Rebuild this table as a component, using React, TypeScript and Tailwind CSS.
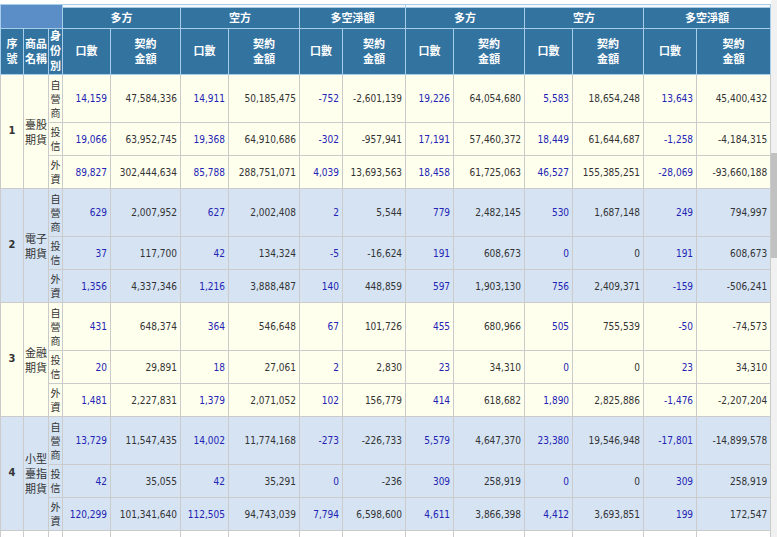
import React from 'react';

type Row = { who: string[]; vals: string[] };
type Group = { no: string; name: string[]; rows: Row[]; bg: string };

const WHO = [['自', '營', '商'], ['投', '信'], ['外', '資']];

const GROUPS: Group[] = [
  {
    no: '1',
    name: ['臺股', '期貨'],
    bg: 'bg-[#ffffee]',
    rows: [
      { who: WHO[0], vals: ['14,159', '47,584,336', '14,911', '50,185,475', '-752', '-2,601,139', '19,226', '64,054,680', '5,583', '18,654,248', '13,643', '45,400,432'] },
      { who: WHO[1], vals: ['19,066', '63,952,745', '19,368', '64,910,686', '-302', '-957,941', '17,191', '57,460,372', '18,449', '61,644,687', '-1,258', '-4,184,315'] },
      { who: WHO[2], vals: ['89,827', '302,444,634', '85,788', '288,751,071', '4,039', '13,693,563', '18,458', '61,725,063', '46,527', '155,385,251', '-28,069', '-93,660,188'] },
    ],
  },
  {
    no: '2',
    name: ['電子', '期貨'],
    bg: 'bg-[#d5e3f3]',
    rows: [
      { who: WHO[0], vals: ['629', '2,007,952', '627', '2,002,408', '2', '5,544', '779', '2,482,145', '530', '1,687,148', '249', '794,997'] },
      { who: WHO[1], vals: ['37', '117,700', '42', '134,324', '-5', '-16,624', '191', '608,673', '0', '0', '191', '608,673'] },
      { who: WHO[2], vals: ['1,356', '4,337,346', '1,216', '3,888,487', '140', '448,859', '597', '1,903,130', '756', '2,409,371', '-159', '-506,241'] },
    ],
  },
  {
    no: '3',
    name: ['金融', '期貨'],
    bg: 'bg-[#ffffee]',
    rows: [
      { who: WHO[0], vals: ['431', '648,374', '364', '546,648', '67', '101,726', '455', '680,966', '505', '755,539', '-50', '-74,573'] },
      { who: WHO[1], vals: ['20', '29,891', '18', '27,061', '2', '2,830', '23', '34,310', '0', '0', '23', '34,310'] },
      { who: WHO[2], vals: ['1,481', '2,227,831', '1,379', '2,071,052', '102', '156,779', '414', '618,682', '1,890', '2,825,886', '-1,476', '-2,207,204'] },
    ],
  },
  {
    no: '4',
    name: ['小型', '臺指', '期貨'],
    bg: 'bg-[#d5e3f3]',
    rows: [
      { who: WHO[0], vals: ['13,729', '11,547,435', '14,002', '11,774,168', '-273', '-226,733', '5,579', '4,647,370', '23,380', '19,546,948', '-17,801', '-14,899,578'] },
      { who: WHO[1], vals: ['42', '35,055', '42', '35,291', '0', '-236', '309', '258,919', '0', '0', '309', '258,919'] },
      { who: WHO[2], vals: ['120,299', '101,341,640', '112,505', '94,743,039', '7,794', '6,598,600', '4,611', '3,866,398', '4,412', '3,693,851', '199', '172,547'] },
    ],
  },
];

const COLS = [23, 25, 14, 48, 70, 48, 71, 43, 63, 48, 71, 48, 71, 53, 74];
const ROW_H = ['h-[48px]', 'h-[33px]', 'h-[33px]'];

const th = 'border border-[#a8cdea] bg-[#33739f] text-white font-bold text-[11px] leading-[15px] text-center align-middle p-0';
const td = 'border border-[#cbcbcb] p-0 align-middle';

const Lines = ({ parts }: { parts: string[] }) => (
  <>
    {parts.map((p, i) => (
      <React.Fragment key={i}>
        {i > 0 && <br />}
        {p}
      </React.Fragment>
    ))}
  </>
);

export default function App() {
  const groups = ['多方', '空方', '多空淨額', '多方', '空方', '多空淨額'];

  return (
    <div className="h-[537px] overflow-hidden bg-white flex font-['DejaVu_Sans_Condensed','DejaVu_Sans','Noto_Sans_CJK_TC',sans-serif]">
      <div className="w-[771px] pt-1">
        <table className="table-fixed border-collapse w-[770px]">
          <colgroup>
            {COLS.map((w, i) => (
              <col key={i} style={{ width: w }} />
            ))}
          </colgroup>
          <thead>
            <tr className="h-[3px]">
              <th rowSpan={2} colSpan={3} className="border border-[#a8cdea] bg-[#5b8ec6] p-0" />
              <th colSpan={6} className="border border-[#a8cdea] bg-[#f7f7f7] p-0 text-[0px] leading-none" />
              <th colSpan={6} className="border border-[#a8cdea] bg-[#f7f7f7] p-0 text-[0px] leading-none" />
            </tr>
            <tr className="h-[21px]">
              {groups.map((g, i) => (
                <th key={i} colSpan={2} className={th}>
                  {g}
                </th>
              ))}
            </tr>
            <tr className="h-[46px]">
              <th className={th}>
                序<br />號
              </th>
              <th className={th}>
                商品<br />名稱
              </th>
              <th className={`${th} text-[10px] leading-[14px]`}>
                身<br />份<br />別
              </th>
              {groups.map((_, i) => (
                <React.Fragment key={i}>
                  <th className={th}>口數</th>
                  <th className={th}>
                    契約<br />金額
                  </th>
                </React.Fragment>
              ))}
            </tr>
          </thead>
          <tbody className="text-[10px] text-[#333333]">
            {GROUPS.map(g =>
              g.rows.map((r, ri) => (
                <tr key={g.no + ri} className={`${ROW_H[ri]} ${g.bg}`}>
                  {ri === 0 && (
                    <>
                      <td rowSpan={3} className={`${td} text-center font-bold text-[11px] text-[#333]`}>
                        {g.no}
                      </td>
                      <td rowSpan={3} className={`${td} text-center text-[11px] leading-[15px] font-['Noto_Sans_CJK_TC',sans-serif]`}>
                        <Lines parts={g.name} />
                      </td>
                    </>
                  )}
                  <td className={`${td} text-center text-[10px] leading-[14px] font-['Noto_Sans_CJK_TC',sans-serif]`}>
                    <Lines parts={r.who} />
                  </td>
                  {r.vals.map((v, vi) => (
                    <td
                      key={vi}
                      className={`${td} text-right pr-[3px] ${vi % 2 === 0 ? 'text-[#2323b4]' : 'text-[#333333]'}`}
                    >
                      {v}
                    </td>
                  ))}
                </tr>
              ))
            )}
            <tr className="h-[48px] bg-[#ffffff]">
              {COLS.map((_, i) => (
                <td key={i} className={td} />
              ))}
            </tr>
          </tbody>
        </table>
      </div>
      <div className="w-[6px] bg-[#f1f1f1] flex flex-col">
        <div className="h-[153px]" />
        <div className="h-[105px] bg-[#c1c1c1]" />
      </div>
    </div>
  );
}
